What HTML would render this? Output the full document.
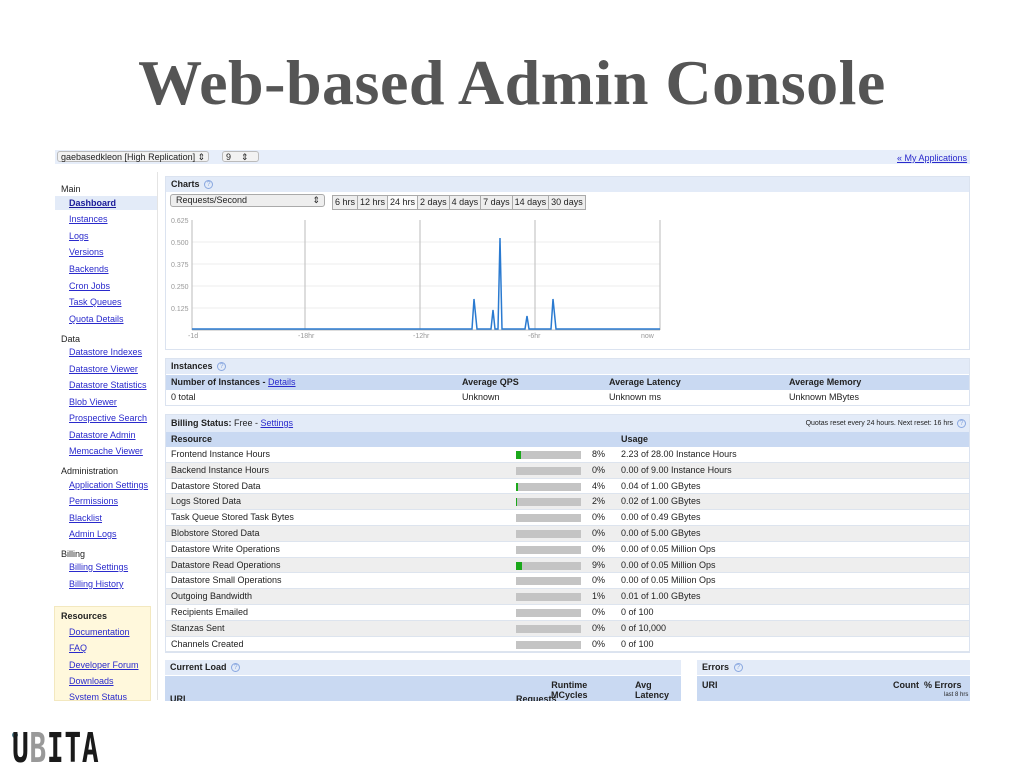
<!DOCTYPE html>
<html><head><meta charset="utf-8"><style>
*{margin:0;padding:0;box-sizing:border-box}
body{width:1024px;height:768px;background:#fff;position:relative;overflow:hidden;font-family:"Liberation Sans",Arial,sans-serif;font-size:9px;color:#222}
.a{position:absolute;white-space:nowrap}
a,.l{color:#2a2acc;text-decoration:underline}
h1{position:absolute;left:0;width:1024px;top:46px;text-align:center;font-family:"Liberation Serif",serif;font-weight:bold;font-size:64px;color:#555;letter-spacing:0.5px}
.hd{background:#e3ebf8;font-weight:bold;font-size:9px;padding:2px 5px;height:15px;line-height:11px}
.q{display:inline-block;width:9px;height:9px;border:1px solid #8aa8e0;border-radius:50%;color:#8aa8e0;font-size:7px;line-height:7px;text-align:center;font-weight:normal;vertical-align:middle;margin-left:2px}
.row{position:absolute;left:0;right:0;height:15.8px;line-height:15.8px;padding-left:5px;border-bottom:1px solid #dde4ee}
.g{background:#eeeeee}
.bar{position:absolute;left:350px;top:4px;width:65px;height:8px;background:#c4c4c4}
.bar i{position:absolute;left:0;top:0;height:8px;background:#1aa81a}
.pc{position:absolute;left:426px}
.us{position:absolute;left:455px}
.side div{position:absolute;white-space:nowrap;font-size:9px}
.side .s{left:69px;color:#2a2acc;text-decoration:underline}
.side .t{left:61px;color:#222}
</style></head><body>
<h1>Web-based Admin Console</h1>

<div class="a" style="left:55px;top:150px;width:915px;height:14px;background:#e7eefa"></div>
<div class="a" style="left:57px;top:151px;font-size:9px;border:1px solid #bbb;border-radius:3px;padding:0 3px;height:11px;line-height:10px;background:#f2f2f2">gaebasedkleon [High Replication] ⇕</div>
<div class="a" style="left:222px;top:151px;font-size:9px;border:1px solid #bbb;border-radius:3px;padding:0 3px;height:11px;line-height:10px;width:37px;background:#f2f2f2">9 &nbsp;&nbsp;&nbsp;⇕</div>
<div class="a l" style="left:897px;top:153px;font-size:9px">« My Applications</div>

<div class="side">
<div class="t" style="top:184px">Main</div>
<div style="left:55px;top:196px;width:102px;height:14px;background:#e3ebf8"></div>
<div class="s" style="top:198px;font-weight:bold;color:#1a1a99">Dashboard</div>
<div class="s" style="top:214px">Instances</div>
<div class="s" style="top:231px">Logs</div>
<div class="s" style="top:247px">Versions</div>
<div class="s" style="top:264px">Backends</div>
<div class="s" style="top:281px">Cron Jobs</div>
<div class="s" style="top:297px">Task Queues</div>
<div class="s" style="top:314px">Quota Details</div>
<div class="t" style="top:334px">Data</div>
<div class="s" style="top:347px">Datastore Indexes</div>
<div class="s" style="top:364px">Datastore Viewer</div>
<div class="s" style="top:380px">Datastore Statistics</div>
<div class="s" style="top:397px">Blob Viewer</div>
<div class="s" style="top:413px">Prospective Search</div>
<div class="s" style="top:430px">Datastore Admin</div>
<div class="s" style="top:446px">Memcache Viewer</div>
<div class="t" style="top:466px">Administration</div>
<div class="s" style="top:480px">Application Settings</div>
<div class="s" style="top:496px">Permissions</div>
<div class="s" style="top:513px">Blacklist</div>
<div class="s" style="top:529px">Admin Logs</div>
<div class="t" style="top:549px">Billing</div>
<div class="s" style="top:562px">Billing Settings</div>
<div class="s" style="top:579px">Billing History</div>
<div style="left:54px;top:606px;width:97px;height:95px;background:#fff8dc;border:1px solid #f3e8bf"></div>
<div class="t" style="top:611px;font-weight:bold">Resources</div>
<div class="s" style="top:627px">Documentation</div>
<div class="s" style="top:643px">FAQ</div>
<div class="s" style="top:660px">Developer Forum</div>
<div class="s" style="top:676px">Downloads</div>
<div class="s" style="top:692px;height:8px;overflow:hidden">System Status</div>
</div>
<div class="a" style="left:157px;top:172px;width:1px;height:528px;background:#e4e4e4"></div>

<!-- Charts -->
<div class="a" style="left:165px;top:176px;width:805px;height:174px;border:1px solid #dbe3f0">
<div class="hd">Charts <span class="q">?</span></div>
</div>
<div class="a" style="left:170px;top:194px;width:155px;height:13px;border:1px solid #aaa;border-radius:3px;background:#eee;font-size:9px;line-height:11px;padding-left:5px">Requests/Second<span style="position:absolute;right:4px">⇕</span></div>
<div class="a" style="left:332px;top:195px;height:15px;font-size:9px;display:flex">
<span style="border:1px solid #aaa;background:#eee;padding:0 2px;line-height:13px">6 hrs</span><span style="border:1px solid #aaa;border-left:0;background:#eee;padding:0 2px;line-height:13px">12 hrs</span><span style="border:1px solid #aaa;border-left:0;background:#fafafa;padding:0 2px;line-height:13px">24 hrs</span><span style="border:1px solid #aaa;border-left:0;background:#eee;padding:0 2px;line-height:13px">2 days</span><span style="border:1px solid #aaa;border-left:0;background:#eee;padding:0 2px;line-height:13px">4 days</span><span style="border:1px solid #aaa;border-left:0;background:#eee;padding:0 2px;line-height:13px">7 days</span><span style="border:1px solid #aaa;border-left:0;background:#eee;padding:0 2px;line-height:13px">14 days</span><span style="border:1px solid #aaa;border-left:0;background:#eee;padding:0 2px;line-height:13px">30 days</span></div>
<svg class="a" style="left:165px;top:210px" width="500" height="135">
<g font-family="Liberation Sans" font-size="7" fill="#999">
<text x="6" y="13">0.625</text><text x="6" y="35">0.500</text><text x="6" y="57">0.375</text><text x="6" y="79">0.250</text><text x="6" y="101">0.125</text>
<text x="23" y="128">-1d</text><text x="133" y="128">-18hr</text><text x="248" y="128">-12hr</text><text x="363" y="128">-6hr</text><text x="476" y="128">now</text>
</g>
<g stroke="#eee"><line x1="27" y1="32" x2="495" y2="32"/><line x1="27" y1="54" x2="495" y2="54"/><line x1="27" y1="76" x2="495" y2="76"/><line x1="27" y1="98" x2="495" y2="98"/></g>
<g stroke="#bbb"><line x1="27" y1="10" x2="27" y2="120"/><line x1="140" y1="10" x2="140" y2="120"/><line x1="255" y1="10" x2="255" y2="120"/><line x1="370" y1="10" x2="370" y2="120"/><line x1="495" y1="10" x2="495" y2="120"/><line x1="27" y1="120" x2="495" y2="120"/></g>
<polyline fill="none" stroke="#2a7ad0" stroke-width="1.5" points="27,119 307,119 309,89 312,119 326,119 328,100 330,119 333,119 335,28 337,119 360,119 362,106 364,119 386,119 388,89 391,119 495,119"/>
</svg>

<!-- Instances -->
<div class="a" style="left:165px;top:358px;width:805px;height:48px;border:1px solid #dbe3f0">
<div class="hd">Instances <span class="q">?</span></div>
<div style="position:absolute;top:16px;left:0;right:0;height:15px;background:#c9d9f2;font-weight:bold;line-height:15px">
<span class="a" style="left:5px">Number of Instances - <span class="l" style="font-weight:normal">Details</span></span><span class="a" style="left:296px">Average QPS</span><span class="a" style="left:443px">Average Latency</span><span class="a" style="left:623px">Average Memory</span></div>
<div style="position:absolute;top:31px;left:0;right:0;height:15px;line-height:15px">
<span class="a" style="left:5px">0 total</span><span class="a" style="left:296px">Unknown</span><span class="a" style="left:443px">Unknown ms</span><span class="a" style="left:623px">Unknown MBytes</span></div>
</div>

<!-- Billing -->
<div class="a" style="left:165px;top:414px;width:805px;height:239px;border:1px solid #dbe3f0">
<div class="hd" style="height:17px;line-height:13px">Billing Status: <span style="font-weight:normal">Free - <span class="l">Settings</span></span><span style="position:absolute;right:3px;font-weight:normal;font-size:7px">Quotas reset every 24 hours. Next reset: 16 hrs <span class="q">?</span></span></div>
<div style="position:absolute;top:17px;left:0;right:0;height:15px;background:#c9d9f2;font-weight:bold;line-height:15px"><span class="a" style="left:5px">Resource</span><span class="a" style="left:455px">Usage</span></div>
<div style="position:absolute;top:32px;left:0;right:0;height:206px">
<div class="row" style="top:0">Frontend Instance Hours<div class="bar"><i style="width:5px"></i></div><span class="pc">8%</span><span class="us">2.23 of 28.00 Instance Hours</span></div>
<div class="row g" style="top:15.8px">Backend Instance Hours<div class="bar"></div><span class="pc">0%</span><span class="us">0.00 of 9.00 Instance Hours</span></div>
<div class="row" style="top:31.6px">Datastore Stored Data<div class="bar"><i style="width:2px"></i></div><span class="pc">4%</span><span class="us">0.04 of 1.00 GBytes</span></div>
<div class="row g" style="top:47.4px">Logs Stored Data<div class="bar"><i style="width:1px"></i></div><span class="pc">2%</span><span class="us">0.02 of 1.00 GBytes</span></div>
<div class="row" style="top:63.2px">Task Queue Stored Task Bytes<div class="bar"></div><span class="pc">0%</span><span class="us">0.00 of 0.49 GBytes</span></div>
<div class="row g" style="top:79px">Blobstore Stored Data<div class="bar"></div><span class="pc">0%</span><span class="us">0.00 of 5.00 GBytes</span></div>
<div class="row" style="top:94.8px">Datastore Write Operations<div class="bar"></div><span class="pc">0%</span><span class="us">0.00 of 0.05 Million Ops</span></div>
<div class="row g" style="top:110.6px">Datastore Read Operations<div class="bar"><i style="width:6px"></i></div><span class="pc">9%</span><span class="us">0.00 of 0.05 Million Ops</span></div>
<div class="row" style="top:126.4px">Datastore Small Operations<div class="bar"></div><span class="pc">0%</span><span class="us">0.00 of 0.05 Million Ops</span></div>
<div class="row g" style="top:142.2px">Outgoing Bandwidth<div class="bar"></div><span class="pc">1%</span><span class="us">0.01 of 1.00 GBytes</span></div>
<div class="row" style="top:158px">Recipients Emailed<div class="bar"></div><span class="pc">0%</span><span class="us">0 of 100</span></div>
<div class="row g" style="top:173.8px">Stanzas Sent<div class="bar"></div><span class="pc">0%</span><span class="us">0 of 10,000</span></div>
<div class="row" style="top:189.6px">Channels Created<div class="bar"></div><span class="pc">0%</span><span class="us">0 of 100</span></div>
</div></div>

<!-- Current Load -->
<div class="a" style="left:165px;top:660px;width:516px;height:41px;overflow:hidden">
<div class="hd">Current Load <span class="q">?</span></div>
<div style="position:absolute;top:16px;left:0;right:0;height:30px;background:#c9d9f2;font-weight:bold;line-height:10px">
<span class="a" style="left:5px;top:18px">URI</span><span class="a" style="left:351px;top:18px">Requests</span><span class="a" style="left:386px;top:4px;text-align:center">Runtime<br>MCycles</span><span class="a" style="left:470px;top:4px">Avg<br>Latency</span></div>
</div>
<div class="a" style="left:697px;top:660px;width:273px;height:41px;overflow:hidden">
<div class="hd">Errors <span class="q">?</span></div>
<div style="position:absolute;top:16px;left:0;right:0;height:30px;background:#c9d9f2;font-weight:bold;line-height:10px">
<span class="a" style="left:5px;top:4px">URI</span><span class="a" style="left:196px;top:4px">Count</span><span class="a" style="left:227px;top:4px">% Errors</span><span class="a" style="left:247px;top:14px;font-size:6px;font-weight:normal">last 8 hrs</span></div>
</div>

<!-- Logo -->
<div class="a" style="left:12px;top:732px;width:6px;height:6px;border-radius:50%;background:#4a7a8a"></div>
<div class="a" style="left:12px;top:724px;font-family:'DejaVu Sans Mono',monospace;font-weight:bold;font-size:41px;line-height:48px;color:#1a1a1a;letter-spacing:1px;transform:scaleX(0.68);transform-origin:left top">U<span style="color:#999">B</span>ITA</div>
</body></html>
